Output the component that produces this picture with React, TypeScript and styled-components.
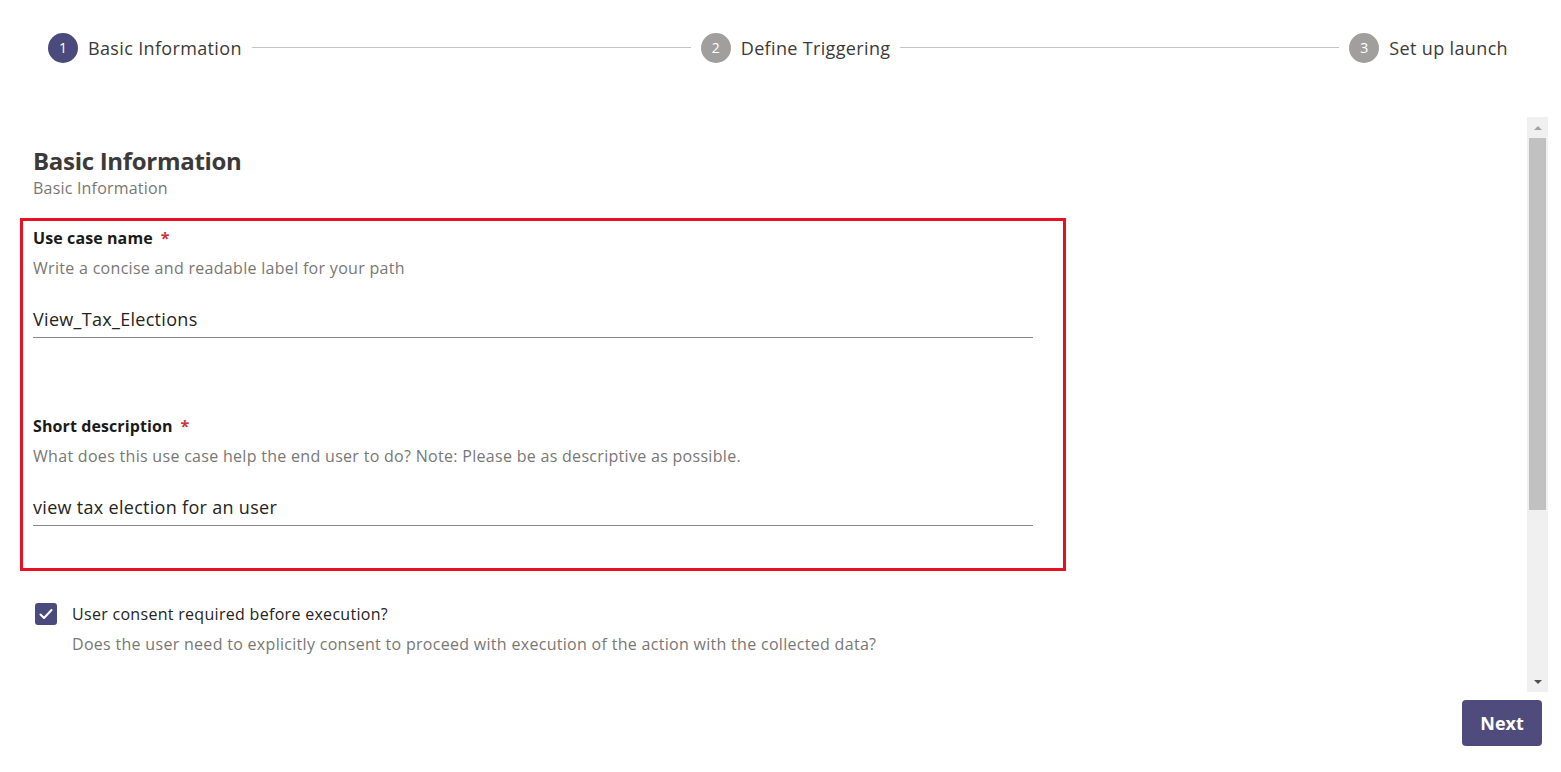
import React from "react";
import styled, { createGlobalStyle } from "styled-components";

const Global = createGlobalStyle`
  html, body { margin: 0; padding: 0; background: #fff; }
  body { font-family: "Segoe UI", "Open Sans", "Noto Sans", sans-serif; color: #252423; }
  * { box-sizing: border-box; }
`;

const Page = styled.div`
  display: flex;
  flex-direction: column;
  width: 1561px;
  height: 772px;
  overflow: hidden;
`;

const Stepper = styled.div`
  display: flex;
  align-items: center;
  height: 95px;
  padding: 0 53px 0 48px;
`;

const Step = styled.div`
  display: flex;
  align-items: center;
  gap: 10px;
  flex: none;
`;

const Circle = styled.div<{ $active?: boolean }>`
  width: 30px;
  height: 30px;
  border-radius: 50%;
  background: ${(p) => (p.$active ? "#4b4a7c" : "#a19f9d")};
  color: #fff;
  font-size: 14px;
  display: flex;
  align-items: center;
  justify-content: center;
`;

const StepLabel = styled.span`
  font-size: 18px;
  letter-spacing: 0.35px;
  color: #3b3a39;
`;

const Line = styled.div`
  flex: 1;
  height: 1px;
  background: #c4c4c4;
  margin: 0 10px;
`;

const Body = styled.div`
  display: flex;
  height: 575px;
  margin-top: 22px;
  padding-right: 13px;
`;

const Content = styled.div`
  flex: 1;
  padding: 28px 0 0 20px;
`;

const Heading = styled.h1`
  margin: 0 0 0 13px;
  font-size: 24px;
  font-weight: 700;
  letter-spacing: -0.3px;
  color: #3b3a39;
  line-height: 32px;
`;

const Sub = styled.div`
  margin: 0 0 0 13px;
  font-size: 16px;
  letter-spacing: 0.2px;
  color: #797775;
  line-height: 22px;
`;

const Highlight = styled.div`
  width: 1046px;
  margin-top: 19px;
  border: 3px solid #e81123;
  padding: 5px 30px 42px 10px;
`;

const Field = styled.div<{ $gap?: number }>`
  display: flex;
  flex-direction: column;
  margin-top: ${(p) => p.$gap ?? 0}px;
`;

const Label = styled.div`
  font-size: 16px;
  font-weight: 700;
  letter-spacing: 0.1px;
  color: #1b1a19;
  line-height: 24px;
`;

const Star = styled.span`
  color: #d13438;
  margin-left: 8px;
`;

const Desc = styled.div`
  font-size: 16px;
  letter-spacing: 0.3px;
  color: #797775;
  line-height: 24px;
  margin-top: 6px;
`;

const Input = styled.div`
  margin-top: 26px;
  font-size: 18px;
  letter-spacing: 0.3px;
  color: #252423;
  line-height: 26px;
  padding-bottom: 5px;
  border-bottom: 1px solid #8a8886;
`;

const CheckRow = styled.div`
  display: flex;
  gap: 15px;
  margin: 31px 0 0 15px;
`;

const Check = styled.div`
  width: 22px;
  height: 22px;
  border-radius: 3px;
  background: #4b4a7c;
  display: flex;
  align-items: center;
  justify-content: center;
  flex: none;
  margin-top: 1px;
`;

const CheckText = styled.div`
  display: flex;
  flex-direction: column;
  gap: 6px;
`;

const CheckLabel = styled.div`
  font-size: 16px;
  letter-spacing: 0.3px;
  color: #252423;
  line-height: 24px;
`;

const CheckDesc = styled.div`
  font-size: 16px;
  letter-spacing: 0.3px;
  color: #797775;
  line-height: 24px;
`;

const Scrollbar = styled.div`
  width: 21px;
  background: #f0f0f0;
  display: flex;
  flex-direction: column;
  align-items: center;
`;

const Arrow = styled.div<{ $down?: boolean }>`
  height: 21px;
  width: 100%;
  display: flex;
  align-items: center;
  justify-content: center;
  &::before {
    content: "";
    width: 0;
    height: 0;
    border-left: 4px solid transparent;
    border-right: 4px solid transparent;
    ${(p) =>
      p.$down
        ? "border-top: 4px solid #505050;"
        : "border-bottom: 4px solid #a3a3a3;"}
  }
`;

const Track = styled.div`
  flex: 1;
  width: 100%;
  display: flex;
  flex-direction: column;
  align-items: center;
`;

const Thumb = styled.div`
  width: 17px;
  height: 372px;
  background: #c1c1c1;
`;

const Footer = styled.div`
  display: flex;
  justify-content: flex-end;
  padding: 8px 19px 0 0;
`;

const NextButton = styled.button`
  width: 80px;
  height: 46px;
  border: none;
  border-radius: 4px;
  background: #4f4c7d;
  color: #fff;
  font-family: inherit;
  font-size: 18px;
  font-weight: 700;
  cursor: pointer;
`;

export default function App() {
  return (
    <>
      <Global />
      <Page>
        <Stepper>
          <Step>
            <Circle $active>1</Circle>
            <StepLabel>Basic Information</StepLabel>
          </Step>
          <Line />
          <Step>
            <Circle>2</Circle>
            <StepLabel>Define Triggering</StepLabel>
          </Step>
          <Line />
          <Step>
            <Circle>3</Circle>
            <StepLabel>Set up launch</StepLabel>
          </Step>
        </Stepper>
        <Body>
          <Content>
            <Heading>Basic Information</Heading>
            <Sub>Basic Information</Sub>
            <Highlight>
              <Field>
                <Label>
                  Use case name<Star>*</Star>
                </Label>
                <Desc>Write a concise and readable label for your path</Desc>
                <Input>View_Tax_Elections</Input>
              </Field>
              <Field $gap={76}>
                <Label>
                  Short description<Star>*</Star>
                </Label>
                <Desc>
                  What does this use case help the end user to do? Note: Please
                  be as descriptive as possible.
                </Desc>
                <Input>view tax election for an user</Input>
              </Field>
            </Highlight>
            <CheckRow>
              <Check>
                <svg width="16" height="16" viewBox="0 0 16 16">
                  <path
                    d="M2.5 8.5l3.5 3.5 7.5-8"
                    fill="none"
                    stroke="#fff"
                    strokeWidth="2"
                    strokeLinecap="round"
                    strokeLinejoin="round"
                  />
                </svg>
              </Check>
              <CheckText>
                <CheckLabel>User consent required before execution?</CheckLabel>
                <CheckDesc>
                  Does the user need to explicitly consent to proceed with
                  execution of the action with the collected data?
                </CheckDesc>
              </CheckText>
            </CheckRow>
          </Content>
          <Scrollbar>
            <Arrow />
            <Track>
              <Thumb />
            </Track>
            <Arrow $down />
          </Scrollbar>
        </Body>
        <Footer>
          <NextButton>Next</NextButton>
        </Footer>
      </Page>
    </>
  );
}
